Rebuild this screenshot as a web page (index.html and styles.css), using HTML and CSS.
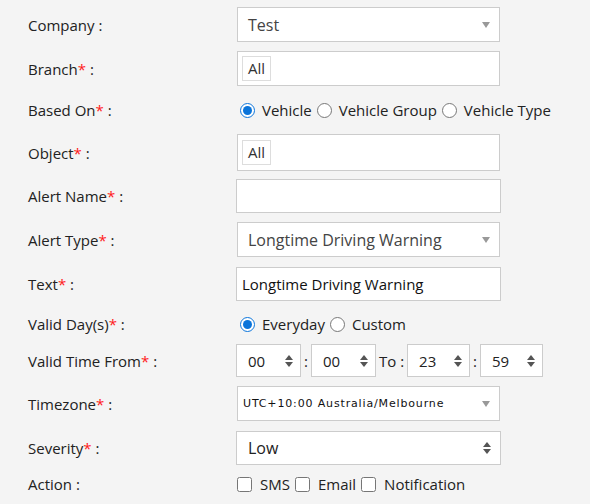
FILE: index.html
```html
<!DOCTYPE html>
<html lang="en">
<head>
	<meta charset="UTF-8">
	<title>Add Alert</title>
	<link rel="stylesheet" href="styles.css">
</head>
<body>
	<form id="alert-form">
		<div class="form-row">
			<label class="form-label">Company :</label>
			<div class="select-box"><span class="select-text">Test</span><span class="caret"></span></div>
		</div>

		<div class="form-row">
			<label class="form-label">Branch<span class="req">*</span> :</label>
			<div class="tag-box"><span class="tag">All</span></div>
		</div>

		<div class="form-row row-choice">
			<label class="form-label">Based On<span class="req">*</span> :</label>
			<div class="choices">
				<label class="choice"><input type="radio" name="based" checked> Vehicle</label>
				<label class="choice"><input type="radio" name="based"> Vehicle Group</label>
				<label class="choice"><input type="radio" name="based"> Vehicle Type</label>
			</div>
		</div>

		<div class="form-row">
			<label class="form-label">Object<span class="req">*</span> :</label>
			<div class="tag-box tall"><span class="tag">All</span></div>
		</div>

		<div class="form-row">
			<label class="form-label">Alert Name<span class="req">*</span> :</label>
			<input class="text-input" type="text" value="">
		</div>

		<div class="form-row">
			<label class="form-label">Alert Type<span class="req">*</span> :</label>
			<div class="select-box"><span class="select-text">Longtime Driving Warning</span><span class="caret"></span></div>
		</div>

		<div class="form-row">
			<label class="form-label">Text<span class="req">*</span> :</label>
			<input class="text-input" type="text" value="Longtime Driving Warning">
		</div>

		<div class="form-row row-choice days">
			<label class="form-label">Valid Day(s)<span class="req">*</span> :</label>
			<div class="choices">
				<label class="choice"><input type="radio" name="days" checked> Everyday</label>
				<label class="choice"><input type="radio" name="days"> Custom</label>
			</div>
		</div>

		<div class="form-row row-time">
			<label class="form-label">Valid Time From<span class="req">*</span> :</label>
			<div class="time-range">
				<div class="spin-box"><span>00</span><svg class="spinner" width="8" height="12" viewBox="0 0 8 12"><polygon points="0,5 4,0 8,5"/><polygon points="0,7 4,12 8,7"/></svg></div>
				<span class="sep">:</span>
				<div class="spin-box"><span>00</span><svg class="spinner" width="8" height="12" viewBox="0 0 8 12"><polygon points="0,5 4,0 8,5"/><polygon points="0,7 4,12 8,7"/></svg></div>
				<span class="sep">To :</span>
				<div class="spin-box narrow"><span>23</span><svg class="spinner" width="8" height="12" viewBox="0 0 8 12"><polygon points="0,5 4,0 8,5"/><polygon points="0,7 4,12 8,7"/></svg></div>
				<span class="sep">:</span>
				<div class="spin-box narrow"><span>59</span><svg class="spinner" width="8" height="12" viewBox="0 0 8 12"><polygon points="0,5 4,0 8,5"/><polygon points="0,7 4,12 8,7"/></svg></div>
			</div>
		</div>

		<div class="form-row">
			<label class="form-label">Timezone<span class="req">*</span> :</label>
			<div class="select-box tz"><span class="select-text">UTC+10:00 Australia/Melbourne</span><span class="caret"></span></div>
		</div>

		<div class="form-row row-severity">
			<label class="form-label">Severity<span class="req">*</span> :</label>
			<div class="spin-box wide"><span>Low</span><svg class="spinner" width="8" height="12" viewBox="0 0 8 12"><polygon points="0,5 4,0 8,5"/><polygon points="0,7 4,12 8,7"/></svg></div>
		</div>

		<div class="form-row row-check">
			<label class="form-label">Action :</label>
			<div class="choices">
				<label class="choice"><input type="checkbox"> SMS</label>
				<label class="choice"><input type="checkbox"> Email</label>
				<label class="choice"><input type="checkbox"> Notification</label>
			</div>
		</div>
	</form>
</body>
</html>
```

FILE: styles.css
```css
body {
	margin: 0;
	background-color: #f4f4f4;
	font-family: "Open Sans", "Noto Sans", sans-serif;
	font-size: 15px;
	color: #222;
}

#alert-form {
	padding: 7px 0 0 28px;
}

.form-row {
	display: grid;
	grid-template-columns: 208px 265px;
	align-items: center;
	height: 35px;
	margin-bottom: 9px;
}

.row-choice {
	height: 30px;
}

.row-choice.days {
	margin-top: -1px;
}

.row-choice + .row-time {
	margin-top: -4px;
}

.row-time {
	height: 33px;
}

.row-severity {
	margin-top: 1px;
}

.row-check {
	height: 20px;
	margin-top: 1px;
}

.form-label {
	white-space: nowrap;
}

.req {
	color: #ff1a1a;
}

/* fake select */
.select-box {
	position: relative;
	box-sizing: border-box;
	height: 35px;
	width: 263px;
	margin-left: 1px;
	padding-left: 10px;
	background: #fff;
	border: 1px solid #ccc;
	display: flex;
	align-items: center;
	font-size: 16px;
	color: #444;
}

.caret {
	position: absolute;
	right: 9px;
	top: 14px;
	border-left: 4px solid transparent;
	border-right: 4px solid transparent;
	border-top: 6px solid #999;
}

.select-box.tz {
	padding-left: 5px;
	font-family: "DejaVu Sans", Verdana, sans-serif;
	font-size: 11px;
	letter-spacing: 0.85px;
	color: #111;
}

/* multi-select tag box */
.tag-box {
	box-sizing: border-box;
	height: 35px;
	width: 263px;
	margin-left: 1px;
	padding-left: 4px;
	background: #fff;
	border: 1px solid #ccc;
	display: flex;
	align-items: center;
}

.tag-box.tall {
	height: 37px;
}

.tag {
	box-sizing: border-box;
	height: 25px;
	padding: 0 5px;
	border: 1px solid #ddd;
	line-height: 23px;
	color: #333;
}

.text-input {
	box-sizing: border-box;
	height: 34px;
	width: 265px;
	margin: 0;
	padding: 0 5px;
	border: 1px solid #ccc;
	background: #fff;
	font-family: inherit;
	font-size: 15px;
	color: #111;
	outline: none;
}

/* radios and checkboxes */
.choices {
	display: flex;
	align-items: center;
	white-space: nowrap;
	padding-left: 4px;
}

.choice {
	display: flex;
	align-items: center;
	margin-right: 5px;
}

.choice input {
	width: 15px;
	height: 15px;
	margin: 0 7px 0 0;
	accent-color: #0a74da;
}

.row-check .choices {
	padding-left: 1px;
}

.row-check .choice input {
	margin-right: 8px;
}

/* number / spinner boxes */
.time-range {
	display: flex;
	align-items: center;
	white-space: nowrap;
	width: max-content;
}

.spin-box {
	flex-shrink: 0;
	box-sizing: border-box;
	height: 33px;
	width: 65px;
	padding: 0 7px 0 11px;
	background: #fff;
	border: 1px solid #ccc;
	display: flex;
	align-items: center;
	justify-content: space-between;
	color: #222;
}

.spin-box.narrow {
	width: 63px;
}

.spin-box.wide {
	width: 265px;
	height: 34px;
	padding-right: 9px;
	font-size: 16px;
}

.spinner {
	fill: #555;
}

.sep {
	padding: 0 3px;
}
```
